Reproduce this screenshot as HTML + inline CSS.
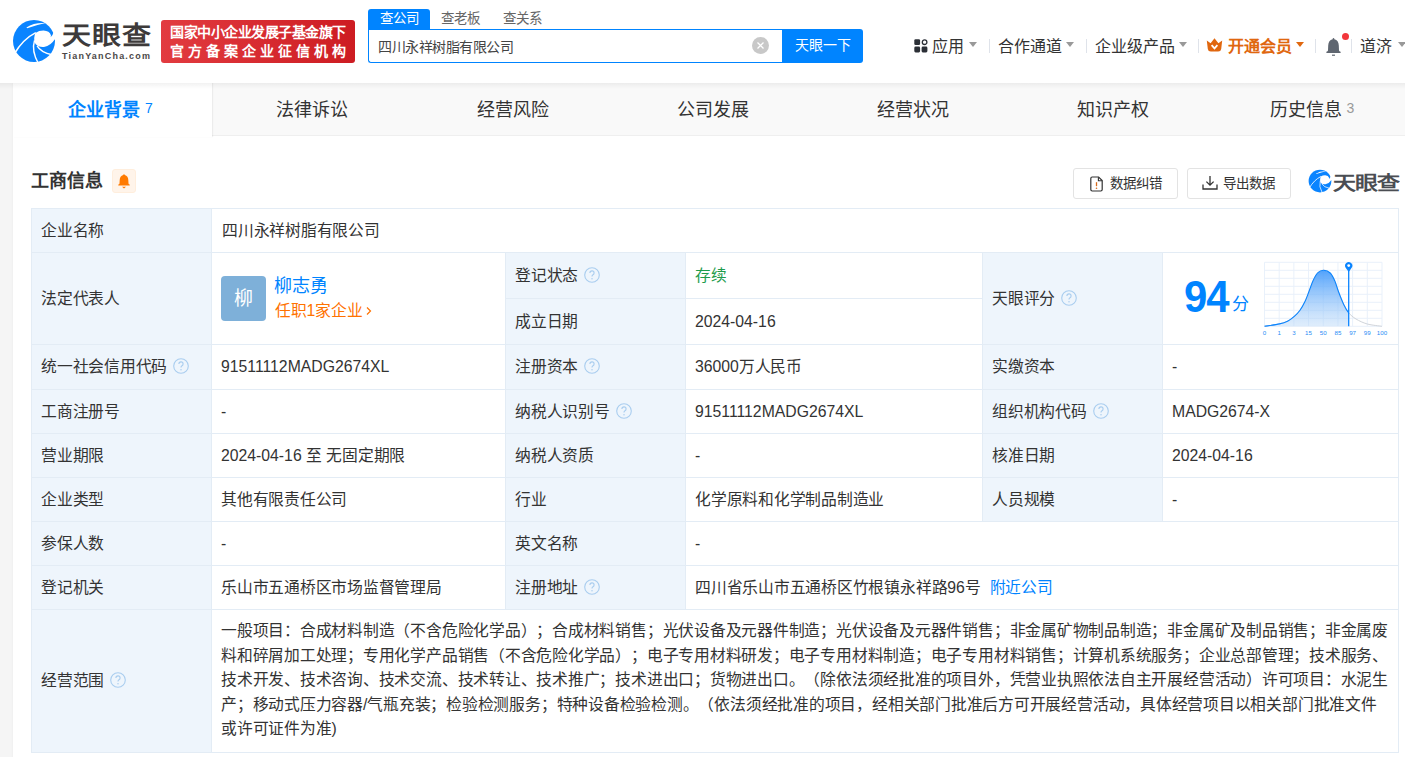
<!DOCTYPE html>
<html lang="zh-CN">
<head>
<meta charset="utf-8">
<style>
*{margin:0;padding:0;box-sizing:border-box}
html,body{width:1405px;height:757px;overflow:hidden}
body{background:#f5f5f5;font-family:"Liberation Sans",sans-serif;color:#333;position:relative;text-spacing-trim:space-all}
.abs{position:absolute}
.nw{white-space:nowrap}
.c{letter-spacing:-0.23px}
/* header */
#hdr{position:absolute;left:0;top:0;width:1405px;height:83px;background:#fff;z-index:5}
#hshadow{position:absolute;left:0;top:83px;width:1405px;height:6px;background:linear-gradient(rgba(0,0,0,.05),rgba(0,0,0,0));z-index:6}
.brand{left:62px;top:16px;font-size:29px;font-weight:bold;color:#3d3a3a;letter-spacing:1px;line-height:34px;transform:scaleY(.86);transform-origin:0 100%}
.brand-en{left:62px;top:51px;font-size:9px;font-weight:bold;color:#4a4747;letter-spacing:1.2px;line-height:11px}
.badge{left:161px;top:20px;width:194px;height:43px;border-radius:3px;background:linear-gradient(90deg,#e23b40,#cd1c22);color:#fff}
.badge .l1{position:absolute;left:9px;top:3px;font-size:14px;line-height:18px;font-weight:bold;letter-spacing:-0.5px}
.badge .l2{position:absolute;left:9px;top:22px;font-size:14px;line-height:18px;font-weight:bold;letter-spacing:4px}
.stab{top:9px;height:20px;font-size:13.5px;line-height:20px;color:#666}
.stab.on{left:368px;width:62px;background:#0084ff;color:#fff;border-radius:3px 3px 0 0;text-align:center}
.sinput{left:368px;top:29px;width:415px;height:34px;border:1px solid #0084ff;border-right:none;border-radius:0 0 0 3px;background:#fff}
.sinput .t{position:absolute;left:9px;top:1px;line-height:32px;font-size:14px;color:#444;letter-spacing:-0.5px}
.clr{left:752px;top:37px;width:17px;height:17px;border-radius:50%;background:#c8c8c8}
.sbtn{left:782px;top:29px;width:81px;height:34px;background:#0084ff;border-radius:0 3px 3px 0;color:#fff;font-size:14px;line-height:32px;text-align:center}
.nav{top:35px;font-size:16px;line-height:24px;color:#333}
.tri{position:absolute;width:0;height:0;border-left:4px solid transparent;border-right:4px solid transparent;border-top:5px solid #999}
.vd{position:absolute;top:39px;width:1px;height:14px;background:#dfe3ea}
/* card */
#card{position:absolute;left:13px;top:83px;width:1420px;height:700px;background:#fff;box-shadow:0 0 2px rgba(0,0,0,.06)}
.tabs{left:0;top:0;width:1420px;height:53px;background:#f9f9f9;border-bottom:1px solid #efefef}
.tab{top:0;width:200px;height:53px;text-align:center;font-size:18px;line-height:55px;color:#333}
.tab.on{background:#fff;color:#0084ff;font-weight:bold;height:54px;box-shadow:1px 0 1px rgba(0,0,0,.05)}
.tab sup{font-size:14px;font-weight:normal;vertical-align:top;position:relative;top:-2px;margin-left:5px;color:#0084ff}
.tab sup.g{color:#999}
/* table */
.cell{position:absolute}
.lb{background:#eef5fc}
.ln{position:absolute;background:#e3ecf5}
.tx{position:absolute;font-size:15.77px;color:#333;white-space:nowrap}
.q{display:inline-block;width:16px;height:16px;vertical-align:middle;margin-left:6px;position:relative;top:-2px}
.btn{position:absolute;top:168px;height:31px;border:1px solid #e3e3e3;border-radius:3px;background:#fff;font-size:13.5px;line-height:29px;color:#333}

</style>
</head>
<body>
<svg width="0" height="0" style="position:absolute">
  <defs>
    <symbol id="lg" viewBox="0 0 48 48">
      <circle cx="24" cy="24" r="21" fill="#0a84ff"/>
      <path d="M25.4,15.9 Q29,13.6 33.5,13.6 Q39.5,13.8 41,18.5 L40.6,20.3 Q42.8,18.6 43.6,15 L48,15 L48,22.5 L44.6,22.5 Q41,28.5 34,30 Q28.5,30.5 25.5,27 Q23.8,24.5 24.2,21 Q24.6,17.5 25.4,15.9 Z" fill="#fff"/>
      <path d="M4.2,37 Q13,22 25.8,15.6" stroke="#fff" stroke-width="1.5" fill="none"/>
      <path d="M24.5,23.5 Q21.3,34 28.4,46.5" stroke="#fff" stroke-width="1.4" fill="none"/>
      <path d="M27.1,28.9 Q31,35.6 42,37.7" stroke="#fff" stroke-width="1.4" fill="none"/>
      <path d="M16.4,10.4 Q24.5,5.2 35.8,6.1 Q26,8.2 17.2,11.2 Z" fill="#fff"/>
    </symbol>
    <symbol id="qi" viewBox="0 0 16 16">
      <circle cx="8" cy="8" r="7.3" fill="none" stroke="#a9cdef" stroke-width="1.1"/>
      <path d="M5.9 6.1 Q5.9 3.9 8 3.9 Q10.1 3.9 10.1 5.9 Q10.1 7.2 8.7 7.9 Q8 8.3 8 9.6" fill="none" stroke="#a9cdef" stroke-width="1.1"/>
      <circle cx="8" cy="11.7" r=".75" fill="#a9cdef"/>
    </symbol>
  </defs>
</svg>
<div id="hdr">
  <svg class="abs" style="left:10px;top:17px" width="48" height="48"><use href="#lg"/></svg>
  <div class="abs brand nw">天眼查</div>
  <div class="abs brand-en nw">TianYanCha.com</div>
  <div class="abs badge"><div class="l1 nw">国家中小企业发展子基金旗下</div><div class="l2 nw">官方备案企业征信机构</div></div>
  <div class="abs stab on nw">查公司</div>
  <div class="abs stab nw" style="left:441px">查老板</div>
  <div class="abs stab nw" style="left:503px">查关系</div>
  <div class="abs sinput"><div class="t nw">四川永祥树脂有限公司</div></div>
  <div class="abs clr"><svg width="17" height="17" viewBox="0 0 17 17" style="position:absolute;left:0;top:0"><path d="M5.5 5.5 L11.5 11.5 M11.5 5.5 L5.5 11.5" stroke="#fff" stroke-width="1.3"/></svg></div>
  <div class="abs sbtn nw">天眼一下</div>
  <!-- nav -->
  <svg class="abs" style="left:914px;top:39px" width="14" height="14" viewBox="0 0 14 14">
    <rect x="0.3" y="0.3" width="5.8" height="5.8" rx="1.3" fill="#2b2f36"/>
    <circle cx="10.6" cy="3.2" r="2.3" fill="none" stroke="#2b2f36" stroke-width="1.3"/>
    <rect x="0.3" y="7.6" width="5.8" height="5.8" rx="1.3" fill="#2b2f36"/>
    <rect x="7.6" y="7.6" width="5.8" height="5.8" rx="1.3" fill="#2b2f36"/>
  </svg>
  <div class="abs nav nw" style="left:932px">应用</div>
  <div class="tri" style="left:969px;top:42px"></div>
  <div class="vd" style="left:989px"></div>
  <div class="abs nav nw" style="left:998px">合作通道</div>
  <div class="tri" style="left:1066px;top:42px"></div>
  <div class="vd" style="left:1086px"></div>
  <div class="abs nav nw" style="left:1095px">企业级产品</div>
  <div class="tri" style="left:1179px;top:42px"></div>
  <div class="vd" style="left:1198px"></div>
  <svg class="abs" style="left:1206px;top:38px" width="17" height="14" viewBox="0 0 17 14">
    <path d="M0.8 2.6 L4.6 5.2 L8.5 0.2 L12.4 5.2 L16.2 2.6 L15.2 11 Q14.8 13.6 12.2 13.6 L4.8 13.6 Q2.2 13.6 1.8 11 Z" fill="#e0670f"/>
    <path d="M5.6 7.2 L8.5 10.4 L11.4 7.2" fill="none" stroke="#fff" stroke-width="1.8"/>
  </svg>
  <div class="abs nav nw" style="left:1228px;color:#e0670f;font-weight:bold">开通会员</div>
  <div class="tri" style="left:1296px;top:42px;border-top-color:#e0670f"></div>
  <div class="vd" style="left:1315px"></div>
  <svg class="abs" style="left:1325px;top:37px" width="17" height="20" viewBox="0 0 17 20">
    <path d="M8.5 1 Q9.3 1 9.4 2.2 Q13.6 3.2 13.8 8.5 L14 13.5 Q14.2 14.6 15.6 14.8 L15.6 16 L1.4 16 L1.4 14.8 Q2.8 14.6 3 13.5 L3.2 8.5 Q3.4 3.2 7.6 2.2 Q7.7 1 8.5 1 Z" fill="#5f6670"/>
    <rect x="7" y="17.6" width="3" height="1.2" fill="#5f6670"/>
  </svg>
  <div class="abs" style="left:1342px;top:33px;width:7px;height:7px;border-radius:50%;background:#f2363b"></div>
  <div class="vd" style="left:1351px"></div>
  <div class="abs nav nw" style="left:1360px">道济</div>
  <div class="tri" style="left:1398px;top:42px"></div>
</div>
<div id="hshadow"></div>

<div id="card">
  <div class="abs tabs"></div>
  <div class="abs tab on nw" style="left:0;width:199px;text-align:left;padding-left:55px">企业背景<sup>7</sup></div>
  <div class="abs tab nw" style="left:199px">法律诉讼</div>
  <div class="abs tab nw" style="left:400px">经营风险</div>
  <div class="abs tab nw" style="left:600px">公司发展</div>
  <div class="abs tab nw" style="left:800px">经营状况</div>
  <div class="abs tab nw" style="left:1000px">知识产权</div>
  <div class="abs tab nw" style="left:1199px">历史信息<sup class="g">3</sup></div>
</div>
<div class="abs nw" style="left:31px;top:168px;font-size:18px;line-height:26px;font-weight:bold;color:#333">工商信息</div>
<div class="abs" style="left:112px;top:169px;width:24px;height:24px;border-radius:3px;background:#fff4ea;border:1px solid #ffeedd">
  <svg width="22" height="22" viewBox="0 0 22 22" style="position:absolute;left:0;top:0">
    <path d="M11 4.2 Q11.7 4.2 11.8 5 Q15.2 5.9 15.3 10 L15.5 13.4 Q15.6 14.2 16.7 14.5 L16.7 15.6 L5.3 15.6 L5.3 14.5 Q6.4 14.2 6.5 13.4 L6.7 10 Q6.8 5.9 10.2 5 Q10.3 4.2 11 4.2 Z" fill="#ff7a00"/>
    <path d="M9 16.8 L13 16.8 L11 18.4 Z" fill="#ff7a00"/>
  </svg>
</div>
<div class="btn nw" style="left:1073px;width:105px">
  <svg width="14" height="16" viewBox="0 0 14 16" style="position:absolute;left:16px;top:7px">
    <path d="M2.2 1 L8.6 1 L12.2 4.6 L12.2 13.6 Q12.2 15 10.8 15 L2.2 15 Q0.8 15 0.8 13.6 L0.8 2.4 Q0.8 1 2.2 1 Z" fill="none" stroke="#333" stroke-width="1.2"/>
    <path d="M8.4 1.2 L8.4 4.8 L12 4.8" fill="none" stroke="#333" stroke-width="1.1"/>
    <path d="M6.5 6.2 L6.5 10.2" stroke="#d86a1a" stroke-width="1.3"/>
    <circle cx="6.5" cy="12.2" r=".8" fill="#d86a1a"/>
  </svg>
  <span class="abs" style="left:36px;top:0">数据纠错</span>
</div>
<div class="btn nw" style="left:1187px;width:104px">
  <svg width="16" height="16" viewBox="0 0 16 16" style="position:absolute;left:14px;top:6px">
    <path d="M8 1 L8 10 M4.4 6.6 L8 10.2 L11.6 6.6" fill="none" stroke="#333" stroke-width="1.3"/>
    <path d="M1 9.5 L1 14 L15 14 L15 9.5" fill="none" stroke="#333" stroke-width="1.3"/>
  </svg>
  <span class="abs" style="left:35px;top:0">导出数据</span>
</div>
<svg class="abs" style="left:1307px;top:168px" width="26" height="26"><use href="#lg" width="26" height="26"/></svg>
<div class="abs nw" style="left:1333px;top:167px;font-size:23px;line-height:28px;font-weight:bold;color:#4a4d52;letter-spacing:-1px;transform:scaleY(.82);transform-origin:0 100%">天眼查</div>

<div id="tbl">
<div class="cell lb" style="left:32px;top:209px;width:179px;height:543px"></div>
<div class="cell lb" style="left:506px;top:253px;width:179px;height:356px"></div>
<div class="cell lb" style="left:983px;top:253px;width:179px;height:268px"></div>
<div class="ln" style="left:31px;top:208px;width:1368px;height:1px"></div>
<div class="ln" style="left:31px;top:252px;width:1368px;height:1px"></div>
<div class="ln" style="left:505px;top:298px;width:477px;height:1px"></div>
<div class="ln" style="left:31px;top:344px;width:1368px;height:1px"></div>
<div class="ln" style="left:31px;top:389px;width:1368px;height:1px"></div>
<div class="ln" style="left:31px;top:433px;width:1368px;height:1px"></div>
<div class="ln" style="left:31px;top:477px;width:1368px;height:1px"></div>
<div class="ln" style="left:31px;top:521px;width:1368px;height:1px"></div>
<div class="ln" style="left:31px;top:565px;width:1368px;height:1px"></div>
<div class="ln" style="left:31px;top:609px;width:1368px;height:1px"></div>
<div class="ln" style="left:31px;top:752px;width:1368px;height:1px"></div>
<div class="ln" style="left:31px;top:208px;width:1px;height:545px"></div>
<div class="ln" style="left:211px;top:208px;width:1px;height:545px"></div>
<div class="ln" style="left:1398px;top:208px;width:1px;height:545px"></div>
<div class="ln" style="left:505px;top:252px;width:1px;height:357px"></div>
<div class="ln" style="left:685px;top:252px;width:1px;height:357px"></div>
<div class="ln" style="left:982px;top:252px;width:1px;height:269px"></div>
<div class="ln" style="left:1162px;top:252px;width:1px;height:269px"></div>
<div class="tx" style="left:41px;top:209px;height:43px;line-height:43px;"><span class="c">企业名称</span></div>
<div class="tx" style="left:222px;top:209px;height:43px;line-height:43px;"><span class="c">四川永祥树脂有限公司</span></div>
<div class="tx" style="left:41px;top:253px;height:91px;line-height:91px;"><span class="c">法定代表人</span></div>
<div class="tx" style="left:515px;top:253px;height:45px;line-height:45px;"><span class="c">登记状态</span><svg class="q"><use href="#qi"/></svg></div>
<div class="tx" style="left:695px;top:253px;height:45px;line-height:45px;"><span style="color:#1e9b4c"><span class="c">存续</span></span></div>
<div class="tx" style="left:515px;top:299px;height:45px;line-height:45px;"><span class="c">成立日期</span></div>
<div class="tx" style="left:695px;top:299px;height:45px;line-height:45px;">2024-04-16</div>
<div class="tx" style="left:992px;top:253px;height:91px;line-height:91px;"><span class="c">天眼评分</span><svg class="q"><use href="#qi"/></svg></div>
<div class="tx" style="left:41px;top:345px;height:44px;line-height:44px;"><span class="c">统一社会信用代码</span><svg class="q"><use href="#qi"/></svg></div>
<div class="tx" style="left:221px;top:345px;height:44px;line-height:44px;">91511112MADG2674XL</div>
<div class="tx" style="left:515px;top:345px;height:44px;line-height:44px;"><span class="c">注册资本</span><svg class="q"><use href="#qi"/></svg></div>
<div class="tx" style="left:695px;top:345px;height:44px;line-height:44px;">36000<span class="c">万人民币</span></div>
<div class="tx" style="left:992px;top:345px;height:44px;line-height:44px;"><span class="c">实缴资本</span></div>
<div class="tx" style="left:1172px;top:345px;height:44px;line-height:44px;">-</div>
<div class="tx" style="left:41px;top:390px;height:43px;line-height:43px;"><span class="c">工商注册号</span></div>
<div class="tx" style="left:221px;top:390px;height:43px;line-height:43px;">-</div>
<div class="tx" style="left:515px;top:390px;height:43px;line-height:43px;"><span class="c">纳税人识别号</span><svg class="q"><use href="#qi"/></svg></div>
<div class="tx" style="left:695px;top:390px;height:43px;line-height:43px;">91511112MADG2674XL</div>
<div class="tx" style="left:992px;top:390px;height:43px;line-height:43px;"><span class="c">组织机构代码</span><svg class="q"><use href="#qi"/></svg></div>
<div class="tx" style="left:1172px;top:390px;height:43px;line-height:43px;">MADG2674-X</div>
<div class="tx" style="left:41px;top:434px;height:43px;line-height:43px;"><span class="c">营业期限</span></div>
<div class="tx" style="left:221px;top:434px;height:43px;line-height:43px;">2024-04-16 <span class="c">至</span> <span class="c">无固定期限</span></div>
<div class="tx" style="left:515px;top:434px;height:43px;line-height:43px;"><span class="c">纳税人资质</span></div>
<div class="tx" style="left:695px;top:434px;height:43px;line-height:43px;">-</div>
<div class="tx" style="left:992px;top:434px;height:43px;line-height:43px;"><span class="c">核准日期</span></div>
<div class="tx" style="left:1172px;top:434px;height:43px;line-height:43px;">2024-04-16</div>
<div class="tx" style="left:41px;top:478px;height:43px;line-height:43px;"><span class="c">企业类型</span></div>
<div class="tx" style="left:221px;top:478px;height:43px;line-height:43px;"><span class="c">其他有限责任公司</span></div>
<div class="tx" style="left:515px;top:478px;height:43px;line-height:43px;"><span class="c">行业</span></div>
<div class="tx" style="left:695px;top:478px;height:43px;line-height:43px;"><span class="c">化学原料和化学制品制造业</span></div>
<div class="tx" style="left:992px;top:478px;height:43px;line-height:43px;"><span class="c">人员规模</span></div>
<div class="tx" style="left:1172px;top:478px;height:43px;line-height:43px;">-</div>
<div class="tx" style="left:41px;top:522px;height:43px;line-height:43px;"><span class="c">参保人数</span></div>
<div class="tx" style="left:221px;top:522px;height:43px;line-height:43px;">-</div>
<div class="tx" style="left:515px;top:522px;height:43px;line-height:43px;"><span class="c">英文名称</span></div>
<div class="tx" style="left:695px;top:522px;height:43px;line-height:43px;">-</div>
<div class="tx" style="left:41px;top:566px;height:43px;line-height:43px;"><span class="c">登记机关</span></div>
<div class="tx" style="left:221px;top:566px;height:43px;line-height:43px;"><span class="c">乐山市五通桥区市场监督管理局</span></div>
<div class="tx" style="left:515px;top:566px;height:43px;line-height:43px;"><span class="c">注册地址</span><svg class="q"><use href="#qi"/></svg></div>
<div class="tx" style="left:695px;top:566px;height:43px;line-height:43px;"><span class="c">四川省乐山市五通桥区竹根镇永祥路</span>96<span class="c">号</span><span style="color:#0084ff;margin-left:9px"><span class="c">附近公司</span></span></div>
<div class="tx" style="left:41px;top:610px;height:142px;line-height:142px;"><span class="c">经营范围</span><svg class="q"><use href="#qi"/></svg></div>
<div class="tx scope" style="left:221px;top:619px;line-height:24.5px"><span class="c">一般项目：合成材料制造（不含危险化学品）；合成材料销售；光伏设备及元器件制造；光伏设备及元器件销售；非金属矿物制品制造；非金属矿及制品销售；非金属废</span><br><span class="c">料和碎屑加工处理；专用化学产品销售（不含危险化学品）；电子专用材料研发；电子专用材料制造；电子专用材料销售；计算机系统服务；企业总部管理；技术服务、</span><br><span class="c">技术开发、技术咨询、技术交流、技术转让、技术推广；技术进出口；货物进出口。（除依法须经批准的项目外，凭营业执照依法自主开展经营活动）许可项目：水泥生</span><br><span class="c">产；移动式压力容器</span>/<span class="c">气瓶充装；检验检测服务；特种设备检验检测。（依法须经批准的项目，经相关部门批准后方可开展经营活动，具体经营项目以相关部门批准文件</span><br><span class="c">或许可证件为准</span>)</div>
<div class="abs nw" style="left:221px;top:276px;width:45px;height:45px;border-radius:4px;background:#7eb0d9;color:#fff;font-size:19px;line-height:45px;text-align:center;text-indent:-1px">柳</div>
<div class="abs nw" style="left:274px;top:274px;font-size:18px;line-height:24px;color:#0084ff">柳志勇</div>
<div class="abs nw" style="left:275px;top:299px;font-size:15.77px;line-height:24px;color:#ff7200"><span class="c">任职1家企业</span><svg width="8" height="12" viewBox="0 0 8 12" style="margin-left:3px;vertical-align:middle;position:relative;top:-1px"><path d="M2 2.5 L5.5 6 L2 9.5" fill="none" stroke="#ff7200" stroke-width="1.2"/></svg></div>
<div class="abs nw" style="left:1184px;top:272px;font-size:45px;line-height:50px;font-weight:bold;color:#0084ff;letter-spacing:-1px;transform:scaleX(.93);transform-origin:0 0">94</div>
<div class="abs nw" style="left:1232px;top:294px;font-size:17px;line-height:22px;color:#0084ff">分</div>
<svg class="abs" style="left:1258px;top:256px" width="136" height="84" viewBox="1258 256 136 84"><defs><linearGradient id="gf" x1="0" y1="0" x2="0" y2="1"><stop offset="0" stop-color="#3f98fb" stop-opacity=".9"/><stop offset="1" stop-color="#b9d8f8" stop-opacity=".45"/></linearGradient><clipPath id="cl"><rect x="1258" y="256" width="90.7" height="84"/></clipPath></defs><line x1="1264.50" y1="262.3" x2="1264.50" y2="326.3" stroke="#e9f1fb" stroke-width="1"/><line x1="1279.19" y1="262.3" x2="1279.19" y2="326.3" stroke="#e9f1fb" stroke-width="1"/><line x1="1293.88" y1="262.3" x2="1293.88" y2="326.3" stroke="#e9f1fb" stroke-width="1"/><line x1="1308.56" y1="262.3" x2="1308.56" y2="326.3" stroke="#e9f1fb" stroke-width="1"/><line x1="1323.25" y1="262.3" x2="1323.25" y2="326.3" stroke="#e9f1fb" stroke-width="1"/><line x1="1337.94" y1="262.3" x2="1337.94" y2="326.3" stroke="#e9f1fb" stroke-width="1"/><line x1="1352.62" y1="262.3" x2="1352.62" y2="326.3" stroke="#e9f1fb" stroke-width="1"/><line x1="1367.31" y1="262.3" x2="1367.31" y2="326.3" stroke="#e9f1fb" stroke-width="1"/><line x1="1382.00" y1="262.3" x2="1382.00" y2="326.3" stroke="#e9f1fb" stroke-width="1"/><line x1="1264.5" y1="262.30" x2="1382" y2="262.30" stroke="#e9f1fb" stroke-width="1"/><line x1="1264.5" y1="270.30" x2="1382" y2="270.30" stroke="#e9f1fb" stroke-width="1"/><line x1="1264.5" y1="278.30" x2="1382" y2="278.30" stroke="#e9f1fb" stroke-width="1"/><line x1="1264.5" y1="286.30" x2="1382" y2="286.30" stroke="#e9f1fb" stroke-width="1"/><line x1="1264.5" y1="294.30" x2="1382" y2="294.30" stroke="#e9f1fb" stroke-width="1"/><line x1="1264.5" y1="302.30" x2="1382" y2="302.30" stroke="#e9f1fb" stroke-width="1"/><line x1="1264.5" y1="310.30" x2="1382" y2="310.30" stroke="#e9f1fb" stroke-width="1"/><line x1="1264.5" y1="318.30" x2="1382" y2="318.30" stroke="#e9f1fb" stroke-width="1"/><line x1="1264.5" y1="326.30" x2="1382" y2="326.30" stroke="#e9f1fb" stroke-width="1"/><path d="M1264.5,326.3 C1267.00,325.90 1275.58,324.80 1279.5,323.9 C1283.42,323.00 1285.53,322.15 1288,320.9 C1290.47,319.65 1292.30,318.18 1294.3,316.4 C1296.30,314.62 1298.22,312.68 1300,310.2 C1301.78,307.72 1303.50,304.62 1305,301.5 C1306.50,298.38 1307.60,295.08 1309,291.5 C1310.40,287.92 1311.90,283.15 1313.4,280 C1314.90,276.85 1316.28,274.23 1318,272.6 C1319.72,270.97 1321.67,270.13 1323.7,270.2 C1325.73,270.27 1328.37,271.23 1330.2,273 C1332.03,274.77 1333.30,277.63 1334.7,280.8 C1336.10,283.97 1337.10,288.07 1338.6,292 C1340.10,295.93 1342.02,300.93 1343.7,304.4 C1345.38,307.87 1346.65,310.37 1348.7,312.8 C1350.75,315.23 1352.90,317.13 1356,319 C1359.10,320.87 1362.98,322.78 1367.3,324 C1371.62,325.22 1379.47,325.92 1381.9,326.3 L1381.9,326.3 L1264.5,326.3 Z" fill="url(#gf)" clip-path="url(#cl)"/><path d="M1264.5,326.3 C1267.00,325.90 1275.58,324.80 1279.5,323.9 C1283.42,323.00 1285.53,322.15 1288,320.9 C1290.47,319.65 1292.30,318.18 1294.3,316.4 C1296.30,314.62 1298.22,312.68 1300,310.2 C1301.78,307.72 1303.50,304.62 1305,301.5 C1306.50,298.38 1307.60,295.08 1309,291.5 C1310.40,287.92 1311.90,283.15 1313.4,280 C1314.90,276.85 1316.28,274.23 1318,272.6 C1319.72,270.97 1321.67,270.13 1323.7,270.2 C1325.73,270.27 1328.37,271.23 1330.2,273 C1332.03,274.77 1333.30,277.63 1334.7,280.8 C1336.10,283.97 1337.10,288.07 1338.6,292 C1340.10,295.93 1342.02,300.93 1343.7,304.4 C1345.38,307.87 1346.65,310.37 1348.7,312.8 C1350.75,315.23 1352.90,317.13 1356,319 C1359.10,320.87 1362.98,322.78 1367.3,324 C1371.62,325.22 1379.47,325.92 1381.9,326.3" fill="none" stroke="#d0d4da" stroke-width="1"/><path d="M1264.5,326.3 C1267.00,325.90 1275.58,324.80 1279.5,323.9 C1283.42,323.00 1285.53,322.15 1288,320.9 C1290.47,319.65 1292.30,318.18 1294.3,316.4 C1296.30,314.62 1298.22,312.68 1300,310.2 C1301.78,307.72 1303.50,304.62 1305,301.5 C1306.50,298.38 1307.60,295.08 1309,291.5 C1310.40,287.92 1311.90,283.15 1313.4,280 C1314.90,276.85 1316.28,274.23 1318,272.6 C1319.72,270.97 1321.67,270.13 1323.7,270.2 C1325.73,270.27 1328.37,271.23 1330.2,273 C1332.03,274.77 1333.30,277.63 1334.7,280.8 C1336.10,283.97 1337.10,288.07 1338.6,292 C1340.10,295.93 1342.02,300.93 1343.7,304.4 C1345.38,307.87 1346.65,310.37 1348.7,312.8 C1350.75,315.23 1352.90,317.13 1356,319 C1359.10,320.87 1362.98,322.78 1367.3,324 C1371.62,325.22 1379.47,325.92 1381.9,326.3" fill="none" stroke="#0a84ff" stroke-width="1.1" clip-path="url(#cl)"/><line x1="1348.7" y1="268" x2="1348.7" y2="326.3" stroke="#0a84ff" stroke-width="1.3"/><path d="M1348.7 272 L1345.7 267.8 A3.6 3.6 0 1 1 1351.7 267.8 Z" fill="#0a84ff"/><circle cx="1348.7" cy="265.6" r="1.4" fill="#fff"/><text x="1264.50" y="334.8" font-size="6.2" fill="#2a8cf5" text-anchor="middle" font-family="Liberation Sans">0</text><text x="1279.19" y="334.8" font-size="6.2" fill="#2a8cf5" text-anchor="middle" font-family="Liberation Sans">1</text><text x="1293.88" y="334.8" font-size="6.2" fill="#2a8cf5" text-anchor="middle" font-family="Liberation Sans">3</text><text x="1308.56" y="334.8" font-size="6.2" fill="#2a8cf5" text-anchor="middle" font-family="Liberation Sans">15</text><text x="1323.25" y="334.8" font-size="6.2" fill="#2a8cf5" text-anchor="middle" font-family="Liberation Sans">50</text><text x="1337.94" y="334.8" font-size="6.2" fill="#2a8cf5" text-anchor="middle" font-family="Liberation Sans">85</text><text x="1352.62" y="334.8" font-size="6.2" fill="#2a8cf5" text-anchor="middle" font-family="Liberation Sans">97</text><text x="1367.31" y="334.8" font-size="6.2" fill="#2a8cf5" text-anchor="middle" font-family="Liberation Sans">99</text><text x="1382.00" y="334.8" font-size="6.2" fill="#2a8cf5" text-anchor="middle" font-family="Liberation Sans">100</text></svg>
</div>
</body>
</html>
